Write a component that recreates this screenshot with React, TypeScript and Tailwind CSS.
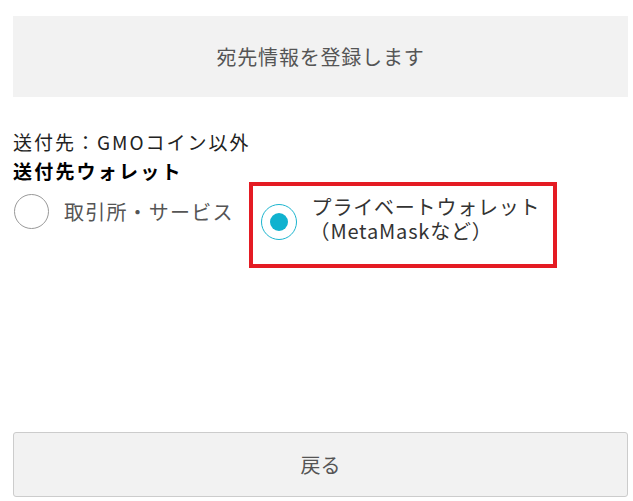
export default function App() {
  const font = { fontFamily: '"Noto Sans CJK JP", "Noto Sans", sans-serif' };
  return (
    <div className="w-[633px] h-[501px] bg-white flex flex-col pl-[13px] pr-[5px] pt-[16px]" style={font}>
      <div className="h-[81px] bg-[#f2f2f2] flex items-center justify-center text-[20px] tracking-[0.8px] text-[#555]">
        宛先情報を登録します
      </div>

      <div className="mt-[30px] text-[19px] tracking-[2px] leading-[30px] text-[#222]">
        送付先：GMOコイン以外
      </div>
      <div className="text-[19px] tracking-[2.2px] leading-[30px] font-bold text-black -mt-[1px]">
        送付先ウォレット
      </div>

      <div className="flex items-start -mt-[4px]">
        <label className="flex items-center gap-[15px] mt-[12px]">
          <span className="w-[35px] h-[35px] rounded-full border border-[#999] bg-white ml-[1px]"></span>
          <span className="text-[20px] tracking-[1.2px] text-[#555]">取引所・サービス</span>
        </label>
        <div className="ml-[15px] w-[308px] h-[86px] border-[4px] border-[#e41b23] flex items-center pl-[8px]">
          <span className="w-[36px] h-[36px] rounded-full border border-[#1cb5cf] flex items-center justify-center shrink-0 -mt-[6px]">
            <span className="w-[18px] h-[18px] rounded-full bg-[#10b2cf]"></span>
          </span>
          <div className="ml-[15px] text-[20px] tracking-[0.8px] leading-[24px] text-[#333] -mt-[12px]">
            <div>プライベートウォレット</div>
            <div className="-ml-[2px]">（MetaMaskなど）</div>
          </div>
        </div>
      </div>

      <div className="flex-1"></div>
      <button className="mb-[4px] h-[65px] w-full bg-[#f2f2f2] border border-[#ccc] rounded-[3px] text-[20px] text-[#555]">
        戻る
      </button>
    </div>
  );
}
